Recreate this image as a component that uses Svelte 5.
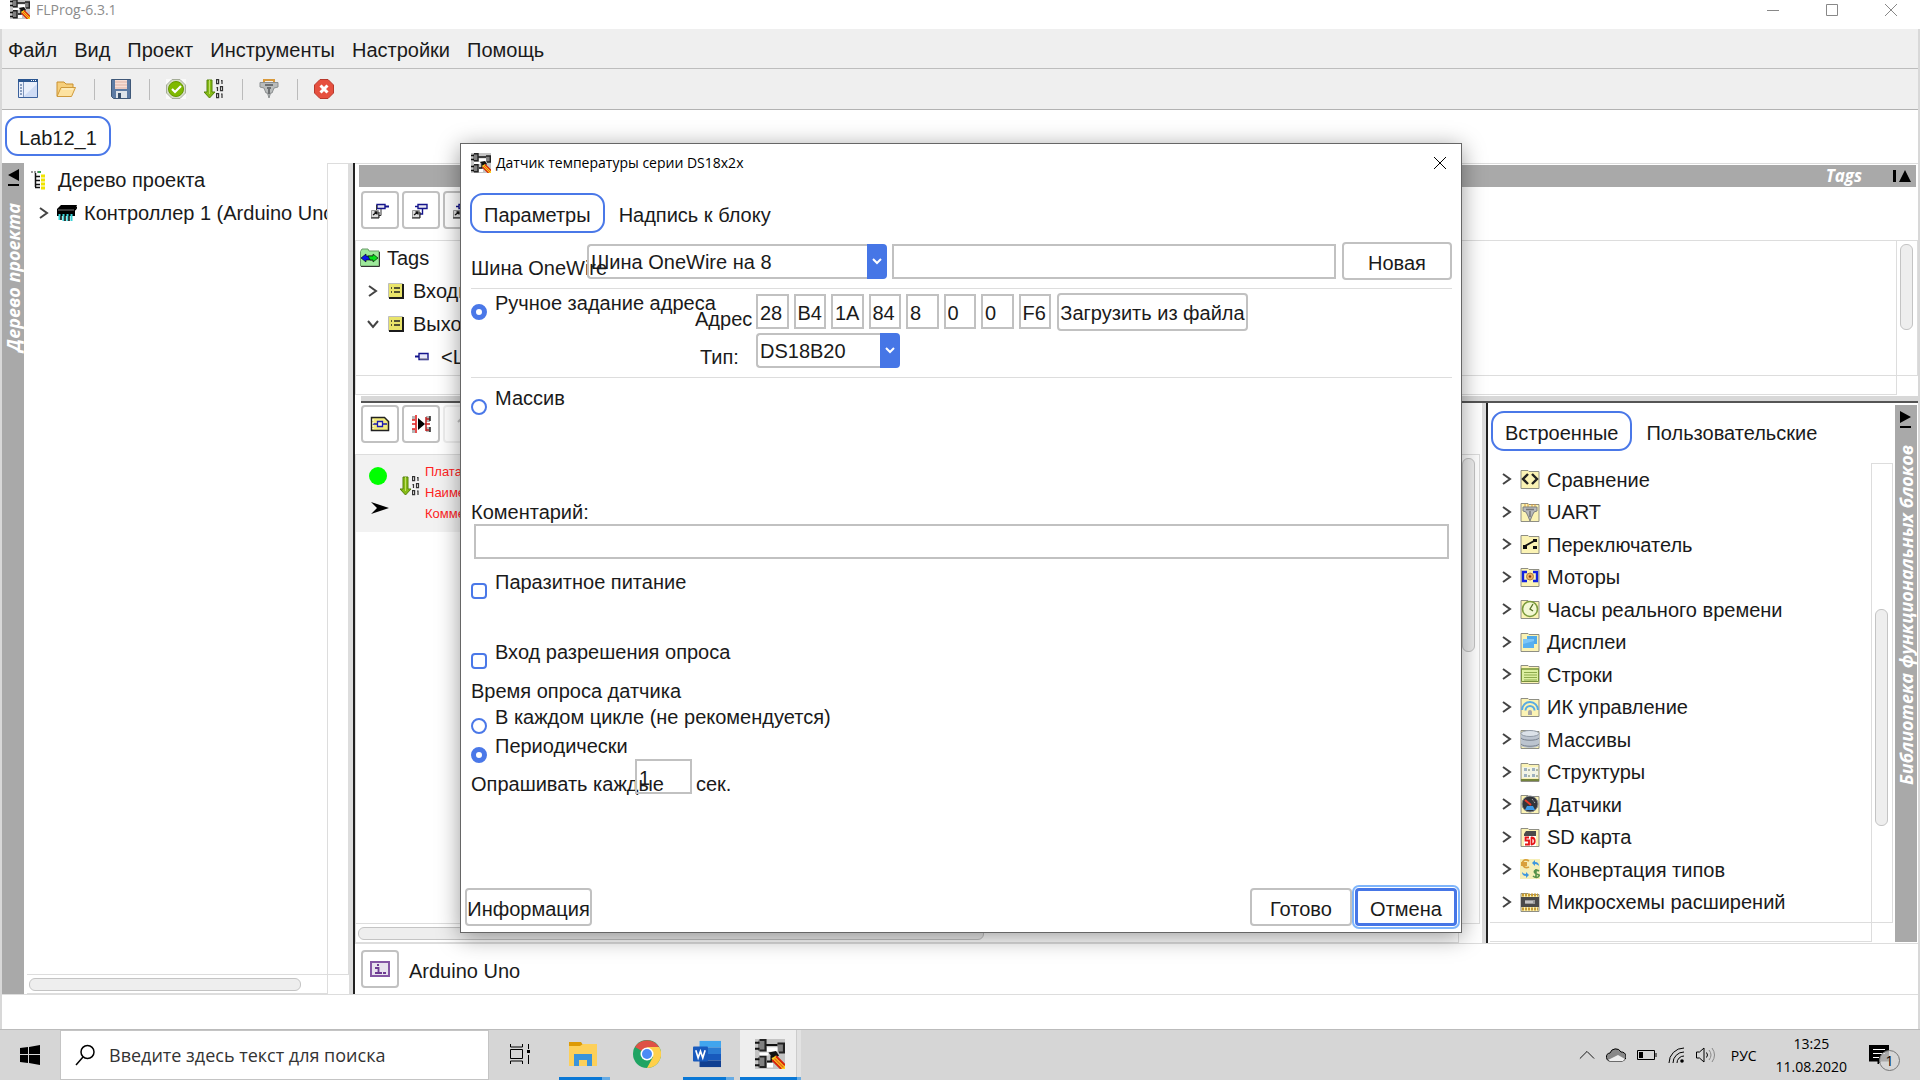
<script>
  let bus = 'Шина OneWire на 8';
  let busName = '';
  let address = ['28', 'B4', '1A', '84', '8', '0', '0', 'F6'];
  let sensorType = 'DS18B20';
  let addressMode = 'manual';
  let comment = '';
  let parasite = false;
  let enableInput = false;
  let pollMode = 'period';
  let period = '1';

  const menu = ['Файл', 'Вид', 'Проект', 'Инструменты', 'Настройки', 'Помощь'];

  const folder = '<path d="M1 1.5h7l1 1h10v17H1z" fill="#fbf3b4" stroke="#8f8f84"/>';

  // 20x20 icons
  const icons = {
    app: '<path d="M0 0h20v20H0z" fill="#c4c4c4"/><path d="M2 1h5v7H2zM2 12h5v7H2zM15 3h4v6h-4z" fill="#808080"/><path d="M0 2.500h3M0 6.500h3M0 13.500h3M0 17.500h3M7 4h8M8 15h3v-4" fill="none" stroke="#111" stroke-width="1.400"/><path d="M3 .700h4v7H3M3 11.700h4v7H3M15 3h4.300v6H16" fill="none" stroke="#222" stroke-width="1.400"/><path d="M8 5.500h7v3H8zM3 9h6v2H3zM8 16h4v3H8z" fill="#fff"/><path d="M9 9l5-1 2 3-3 3z" fill="#111"/><path d="M11 13l3-2 6 6v3h-3z" fill="#ffd21c"/><path d="M14 11.500l6 6M11.500 14l6 6" stroke="#d7260d" stroke-width="1.300"/><path d="M13 13l6 6" stroke="#e8661a"/>',
    project: '<path d="M.5.5h19v18H.5z" fill="#e9effc" stroke="#3b619c"/><path d="M0 0h20v3H0z" fill="#2b5691"/><path d="M5.5 3v15" stroke="#7f96bd"/><path d="M2 6h2M2 9h2M2 12h2M2 15h2" stroke="#2c4f82"/><path d="M13 1.5h1M15 1.5h1M17 1.5h1" stroke="#fff"/><path d="M6 17L19 5v13H6z" fill="#cfdcf5"/>',
    open: '<path d="M1 17V3h7l2 2h7v3" fill="#f6cf7c" stroke="#c9902f"/><path d="M1 17.500L5 8.500h14.500l-4 9z" fill="#fde2a0" stroke="#cf9a3c"/><path d="M6 10h11" stroke="#fff4d2"/>',
    save: '<path d="M.5.500h19v19h-17l-2-2z" fill="#5d7ba4" stroke="#3f5878"/><path d="M4 1h12v9H4z" fill="#f6ded6"/><path d="M4 3h12M4 6h12M4 9h12" stroke="#dfb3a6"/><path d="M5 12h11v7H5z" fill="#dfe4ea"/><path d="M7 14h3v5H7z" fill="#38506e"/>',
    check: '<path d="M0 0h20v20H0z" fill="#fafafa"/><path d="M6 .500h8l5.500 5.500v8L14 19.500H6L.5 14V6z" fill="#d6dcc9" stroke="#a5ad98"/><circle cx="10" cy="10" r="7.500" fill="#7fb900" stroke="#679900"/><path d="M6 10l3 3 6-6" fill="none" stroke="#fff" stroke-width="2.200"/>',
    upload: '<path d="M3 1h5v12h3l-5.500 6L0 13h3z" fill="#86bb16" stroke="#55830b"/><path d="M5.500 1v14" stroke="#c0e069"/><g fill="none" stroke="#333" stroke-width="1.200"><path d="M12.600.600h2v4h-2zM12.600 14.600h2v4h-2zM16.500 7.600h2v4h-2zM17 1.600h1V5M12.500 8.600h1V12M17 15h1v4"/></g>',
    plug: '<path d="M5 0v4M15 0v4M5 1h10" stroke="#d99a3c" stroke-width="2"/><path d="M1 3.500h18V8l-4 1-2 5h-1.500L10 19l-1.500-5H7L5 9 1 8z" fill="#b9bcbc" stroke="#8b8f90"/><path d="M6 6h8M8 9h4M10 9v6" stroke="#6d7072" stroke-width="2"/>',
    stop: '<path d="M6 .5h8L19.500 6v8L14 19.500H6L.5 14V6z" fill="#e6503f" stroke="#b8392c"/><path d="M6.500 6.500l7 7m0-7l-7 7" stroke="#fff" stroke-width="3"/>',
    root: '<path d="M0 2h9" stroke="#9a9a9a" stroke-width="2" stroke-dasharray="2 1"/><path d="M4.500 3v14M4 6.500h5M4 10.500h5M4 14.500h5M4 17.500h5" fill="none" stroke="#111" stroke-width="1.500"/><path d="M10 6h4M10 10h4M10 14h4M10 18h4" stroke="#f0e400" stroke-width="3"/><path d="M7 2h3" stroke="#3aa655" stroke-width="2"/>',
    chip: '<path d="M0 6l4-4h16l-2 5v6H0z" fill="#000"/><path d="M1 7h16" stroke="#777"/><path d="M2.500 11v6M6.500 11v7M10.500 11v7M14.500 11v7" stroke="#3bd3d8" stroke-width="2"/><path d="M4 13v4M8 13v5M12 13v5M18 7l2-3" stroke="#000" stroke-width="1.500"/>',
    tags: '<path d="M.5 3.500L2 1h6l1 2h10v15H.5z" fill="#9de89a" stroke="#6d9b6a"/><path d="M1 18.500h18.500V4" fill="none" stroke="#333"/><path d="M1 10l5-4v2h7v4H6v2z" fill="#0a16e8" stroke="#000" stroke-width=".6"/><path d="M8 8h5V6l5 4-5 4v-2h-3z" fill="#06e01a" stroke="#000" stroke-width=".6"/>',
    list: '<path d="M2.500 2.500h14v14h-14z" fill="#e9e46a" stroke="#bdbdbd"/><path d="M3 17h14V3" fill="none" stroke="#1b1b1b" stroke-width="2"/><path d="M5 7h1M8 7h6M5 11h1M8 11h6" stroke="#222" stroke-width="1.600"/>',
    tag: '<path d="M1 9.500h4" stroke="#14148c" stroke-width="2"/><path d="M5 6.500h9v6H5z" fill="#e6e6fa" stroke="#14148c" stroke-width="1.400"/><path d="M6 12h8" stroke="#888"/>',
    addTag: '<path d="M7 4.500h8v4H7z" fill="#e6e6f2" stroke="#14148c" stroke-width="1.400"/><path d="M15 6.500h4" stroke="#14148c" stroke-width="2"/><path d="M6.500 5v7M9 15.500h2V9" fill="none" stroke="#333"/><path d="M1.500 10.500h7v7h-7z" fill="#ddd" stroke="#999"/><path d="M3 15l4-3M4.500 12H7v2.500" fill="none" stroke="#111" stroke-width="1.300"/><path d="M1 18h8v-6" fill="none" stroke="#111"/>',
    addTag2: '<path d="M7 4.500h9v4H7z" fill="#e6e6f2" stroke="#14148c" stroke-width="1.400"/><path d="M4 6.500h3M11.500 9v5H9" fill="none" stroke="#14148c" stroke-width="1.400"/><path d="M1.500 10.500h7v7h-7z" fill="#ddd" stroke="#999"/><path d="M3 15l4-3M4.500 12H7v2.500" fill="none" stroke="#111" stroke-width="1.300"/><path d="M1 18h8v-6" fill="none" stroke="#111"/>',
    board: '<path d="M1.500 3.500h13l4 4v9h-17z" fill="#f2eb7b" stroke="#222" stroke-width="1.500"/><path d="M7.500 7.500h5v5h-5zM3 10h4M13 10h4" fill="#fffbd0" stroke="#1a1ab0" stroke-width="1.300"/><path d="M3 5v10" stroke="#fff" stroke-dasharray="2 1"/>',
    convert: '<path d="M1 2h3v4H1zM1 15h3v4H1zM15 2h4v6h-4zM15 13h4v5h-4z" fill="#b5b5b5"/><path d="M5 1v18M1 10h4M1 6h3M1 15h3" stroke="#e02222" stroke-width="1.600"/><path d="M7 4l7 6-7 6z" fill="#000"/><path d="M14 10h5M15 3v14M15 5h4M15 16h3" fill="none" stroke="#c02222" stroke-width="1.500"/><path d="M19 2v5M19 13v5" stroke="#222" stroke-width="1.500"/>',
    up: '<path d="M6 8l5-5 5 5M11 3v13" fill="none" stroke="#c4c4c4" stroke-width="2"/>',
    info: '<path d="M1 3h18v14H1z" fill="#e8e2ee" stroke="#8456a4" stroke-width="2"/><path d="M7 6h2M5 9h3.500v5M5 14h7M13 14h3" fill="none" stroke="#6d3b92" stroke-width="1.800"/>',
    compare: folder + '<path d="M8 5l-5 5 5 5M12 5l5 5-5 5" fill="none" stroke="#222" stroke-width="2.400"/>',
    uart: folder + '<path d="M5 2v3M8 2v3M12 2v3M15 2v3" stroke="#d99a3c"/><path d="M3 5h14v4l-3 1-2 4-2 5-2-5-2-4-3-1z" fill="#b7b9ba" stroke="#7d8082"/><path d="M6 7.500h8M10 9v6" stroke="#777" stroke-width="1.500"/>',
    switch: folder + '<path d="M3 11h4v4H3zM13 5h4v3h-4zM13 12h4v3h-4z" fill="#111"/><path d="M5 12l9-5" stroke="#111" stroke-width="2"/>',
    motor: folder + '<path d="M7 5H3v9h4M13 5h4v9h-4" fill="none" stroke="#1222e0" stroke-width="2.400"/><circle cx="10" cy="9.500" r="3.500" fill="#f0b060" stroke="#b08040"/><circle cx="10" cy="9.500" r="1.200" fill="#7a3b10"/>',
    clock: folder + '<circle cx="10" cy="10" r="7.500" fill="#f3f8d4" stroke="#7b9b3c" stroke-width="1.600"/><path d="M13 5l-3 5 3 2" fill="none" stroke="#567028" stroke-width="1.300"/>',
    display: folder + '<path d="M7 4h10v8H7z" fill="#4fa9ea"/><path d="M3 7h11v9H3z" fill="#7cc6f8"/><path d="M3 12l11-3v7H3z" fill="#58b0f0"/>',
    strings: folder + '<path d="M1.500 4.500h17v13h-17z" fill="#dcefa0" stroke="#78913c"/><path d="M2 5h16" stroke="#94ad54" stroke-width="2"/><path d="M4 8.500h13M4 11h13M4 13.500h13M4 16h13" stroke="#8daa4d"/>',
    ir: folder + '<path d="M2 13a8 8 0 0 1 16 0M5.500 13.500a4.500 4.500 0 0 1 9 0" fill="none" stroke="#58abe4" stroke-width="2"/><path d="M8 18v-3a2 2 0 0 1 4 0v3z" fill="#a5a5a5"/>',
    arrays: folder + '<path d="M1 4v12c0 4 18 4 18 0V4z" fill="#bcc4cf"/><path d="M1 9c2 3 16 3 18 0M1 15c2 3 16 3 18 0" fill="none" stroke="#78818e"/><ellipse cx="10" cy="4.500" rx="9" ry="3" fill="#dce2e9" stroke="#929ba7"/>',
    structs: folder + '<path d="M2 5h16v11H2z" fill="#f3f5e5"/><path d="M4 6h3v3H4zM4 12h3v3H4zM12 6h3v3h-3zM12 12h3v3h-3z" fill="#9fb2c0"/><path d="M8 8h2M8 14h2M16 8h2M16 14h2" stroke="#6b7c62"/><path d="M1 18h18" stroke="#74843e" stroke-width="2"/>',
    sensors: folder + '<circle cx="10" cy="10" r="8" fill="#33363b" stroke="#84888e"/><path d="M5 16h10l-2-4H7z" fill="#3c9ae8"/><path d="M5 6l6 5" stroke="#e63a2a" stroke-width="2"/><path d="M12 5l3 4" stroke="#c9ccd0" stroke-dasharray="1 1"/>',
    sd: folder + '<path d="M6 4h10v15H4V7z" fill="#4b4b4b"/><path d="M4 9h12v10H4z" fill="#fff"/><path d="M9 10.500H5.500v3H9v4H5M11.500 10v8M11 10.500c5 0 5 7 0 7" fill="none" stroke="#e61414" stroke-width="1.800"/>',
    types: '<path d="M0 0h20v20H0z" fill="#f6efb8"/><path d="M9 2C4-1 2 3 2.500 5S5 10 9 8M1 4h6M1 6h6" fill="none" stroke="#d9a03c" stroke-width="1.800"/><path d="M19 12c-3-2-6 0-4 2s5 1 4 3-4 2-6 0M16 10v9" fill="none" stroke="#57924b" stroke-width="1.600"/><path d="M12 4l3-3v2c3 0 4 2 4 4-1-1-2-2-4-2v2zM9 16l-3 3v-2c-3 0-4-2-4-4 1 1 2 2 4 2v-2z" fill="#3f97de"/>',
    ics: folder + '<path d="M2 3h16M2 17h16" stroke="#c89c34" stroke-width="3" stroke-dasharray="2 1"/><path d="M1 5h18v10H1z" fill="#4a4a4a"/><path d="M5 8h10v4H5z" fill="#999"/><path d="M6 9v2M8 9v2M10 9v2M12 9v2" stroke="#eee"/>'
  };

  const library = [
    ['compare', 'Сравнение'],
    ['uart', 'UART'],
    ['switch', 'Переключатель'],
    ['motor', 'Моторы'],
    ['clock', 'Часы реального времени'],
    ['display', 'Дисплеи'],
    ['strings', 'Строки'],
    ['ir', 'ИК управление'],
    ['arrays', 'Массивы'],
    ['structs', 'Структуры'],
    ['sensors', 'Датчики'],
    ['sd', 'SD карта'],
    ['types', 'Конвертация типов'],
    ['ics', 'Микросхемы расширений']
  ];
</script>

{#snippet icon(name)}
  <svg class="icon" viewBox="0 0 20 20" aria-hidden="true">{@html icons[name]}</svg>
{/snippet}

{#snippet chevron(open)}
  <svg class="chevron" viewBox="0 0 12 14" aria-hidden="true">
    <path d={open ? 'M1 4l5 6 5-6' : 'M2 2l7 5-7 5'} />
  </svg>
{/snippet}

{#snippet arrow()}
  <span class="drop"><svg viewBox="0 0 12 12"><path d="M2 4l4 4 4-4" /></svg></span>
{/snippet}

<div class="screen">
  <header class="titlebar">
    {@render icon('app')}
    <span class="title">FLProg-6.3.1</span>
    <div class="window-buttons">
      <button aria-label="Свернуть"><svg viewBox="0 0 14 14"><path d="M1 7.500h12" /></svg></button>
      <button aria-label="Развернуть"><svg viewBox="0 0 14 14"><path d="M1.500 1.500h11v11h-11z" /></svg></button>
      <button aria-label="Закрыть"><svg viewBox="0 0 14 14"><path d="M1 1l12 12M13 1L1 13" /></svg></button>
    </div>
  </header>

  <div class="window">
    <nav class="menubar">
      {#each menu as item}
        <button>{item}</button>
      {/each}
    </nav>

    <div class="toolbar">
      <button aria-label="Новый проект">{@render icon('project')}</button>
      <button aria-label="Открыть">{@render icon('open')}</button>
      <i></i>
      <button aria-label="Сохранить">{@render icon('save')}</button>
      <i></i>
      <button aria-label="Проверить">{@render icon('check')}</button>
      <button aria-label="Загрузить">{@render icon('upload')}</button>
      <i></i>
      <button aria-label="Монитор порта">{@render icon('plug')}</button>
      <i></i>
      <button aria-label="Стоп">{@render icon('stop')}</button>
    </div>

    <div class="project-tabs">
      <button class="tab active">Lab12_1</button>
    </div>

    <div class="workspace">
      <aside class="project">
        <div class="strip">
          <svg viewBox="0 0 12 18"><path d="M12 0v12L1 6zM1 15h11v2H1z" /></svg>
          <span>Дерево проекта</span>
        </div>
        <div class="scroll">
          <div class="tree">
            <div class="node root">{@render icon('root')}<span>Дерево проекта</span></div>
            <div class="node">{@render chevron(false)}{@render icon('chip')}<span>Контроллер 1 (Arduino Uno)</span></div>
          </div>
          <div class="vbar"></div>
          <div class="hbar"><div class="thumb tree-thumb"></div></div>
          <div class="corner"></div>
        </div>
      </aside>
      <div class="vsplit"></div>

      <main>
        <section class="tags">
          <div class="tags-head">
            <span>Tags</span>
            <svg viewBox="0 0 18 12"><path d="M0 0h3v12H0zM6 12L12 0l6 12z" /></svg>
          </div>
          <div class="tools">
            <button aria-label="Добавить вход">{@render icon('addTag')}</button>
            <button aria-label="Добавить выход">{@render icon('addTag2')}</button>
            <button aria-label="Добавить тег">{@render icon('addTag2')}</button>
          </div>
          <div class="scroll framed">
            <div class="tree">
              <div class="node root">{@render icon('tags')}<span>Tags</span></div>
              <div class="node">{@render chevron(false)}{@render icon('list')}<span>Входы</span></div>
              <div class="node">{@render chevron(true)}{@render icon('list')}<span>Выходы</span></div>
              <div class="node leaf">{@render icon('tag')}<span>&lt;LED</span></div>
            </div>
            <div class="vbar"><div class="thumb tags-thumb"></div></div>
            <div class="hbar"></div>
            <div class="corner"></div>
          </div>
        </section>
        <div class="hsplit"></div>

        <div class="lower">
          <section class="scheme">
            <div class="tools">
              <button aria-label="Добавить плату">{@render icon('board')}</button>
              <button aria-label="Преобразовать">{@render icon('convert')}</button>
              <button aria-label="Вверх" disabled>{@render icon('up')}</button>
            </div>
            <div class="scroll framed">
              <div class="canvas">
                <div class="board-row">
                  <svg class="state" viewBox="0 0 20 50">
                    <circle cx="10" cy="10" r="9" fill="#0f0" />
                    <path d="M3 36l18 6-18 6 6-6z" />
                  </svg>
                  {@render icon('upload')}
                  <div class="board-text">
                    <span>Плата:</span>
                    <span>Наименование:</span>
                    <span>Комментарий:</span>
                  </div>
                </div>
              </div>
              <div class="vbar"><div class="thumb scheme-vthumb"></div></div>
              <div class="hbar"><div class="thumb scheme-hthumb"></div></div>
              <div class="corner"></div>
            </div>
          </section>
          <div class="vsplit"></div>
          <section class="library">
            <div class="library-body">
              <div class="tabs">
                <button class="tab active">Встроенные</button>
                <button class="tab">Пользовательские</button>
              </div>
              <div class="scroll">
                <div class="blocks">
                  {#each library as [name, label]}
                    <div class="node">{@render chevron(false)}{@render icon(name)}<span>{label}</span></div>
                  {/each}
                </div>
                <div class="vbar"><div class="thumb library-thumb"></div></div>
                <div class="hbar"></div>
                <div class="corner"></div>
              </div>
            </div>
            <div class="strip">
              <svg viewBox="0 0 12 18"><path d="M0 0v12l11-6zM0 15h11v2H0z" /></svg>
              <span>Библиотека функциональных блоков</span>
            </div>
          </section>
        </div>

        <div class="status tools">
          <button aria-label="О контроллере">{@render icon('info')}</button>
          <span>Arduino Uno</span>
        </div>
      </main>
    </div>
  </div>

  <footer class="taskbar">
    <button class="start" aria-label="Пуск">
      <svg viewBox="0 0 20 20"><path d="M0 3l8-1v7H0zM9 2l11-2v9H9zM0 10h8v8l-8-1zM9 10h11v10L9 18z" /></svg>
    </button>
    <label class="search">
      <svg viewBox="0 0 22 22"><circle cx="13.500" cy="8" r="6.500" /><path d="M9 13l-7 8" /></svg>
      <input type="text" placeholder="Введите здесь текст для поиска" />
    </label>
    <button class="task overview" aria-label="Представление задач">
      <svg viewBox="0 0 22 20"><path d="M1.500 0v3h12V0M1.500 20v-3h12v3M1.500 5.500h12v9h-12zM19.500 0v5M19.500 11v9" /><path d="M18 6h3v3h-3z" fill="#000" stroke="none" /></svg>
    </button>
    <button class="task running" aria-label="Проводник">
      <svg viewBox="0 0 28 24"><path d="M0 0h12l2 3v5H0z" fill="#dd9a06" /><path d="M0 4h11l3-2h14v22H0z" fill="#fdd05a" /><path d="M5 24V12h18v12h-5v-6h-8v6z" fill="#3b94dc" /></svg>
    </button>
    <button class="task" aria-label="Chrome">
      <svg viewBox="0 0 28 28"><circle cx="14" cy="14" r="14" fill="#1fa463" /><path d="M14 14L2 7a14 14 0 0 1 24 0z" fill="#de5246" /><path d="M14 7h12.200A14 14 0 0 1 14 28l6-11z" fill="#ffd04b" /><circle cx="14" cy="14" r="6.500" fill="#fff" /><circle cx="14" cy="14" r="5" fill="#4c8bf5" /></svg>
    </button>
    <button class="task running" aria-label="Word">
      <svg viewBox="0 0 30 28"><path d="M7 0h23v7H7z" fill="#41a5ee" /><path d="M7 7h23v7H7z" fill="#2b7cd3" /><path d="M7 14h23v7H7z" fill="#185abd" /><path d="M7 21h23v7H7z" fill="#103f91" /><rect y="6" width="16" height="16" rx="1" fill="#185abd" /><path d="M3 10l2.500 8L8 11l2.500 7L13 10" fill="none" stroke="#fff" stroke-width="1.800" /></svg>
    </button>
    <button class="task running current" aria-label="FLProg">{@render icon('app')}</button>

    <div class="tray">
      <svg class="up" viewBox="0 0 18 10"><path d="M1 9l8-8 8 8" /></svg>
      <svg class="cloud" viewBox="0 0 20 14"><path d="M5 13a4 4 0 0 1-1-8 6 6 0 0 1 11-1 4.500 4.500 0 0 1 1 9z" fill="#888" /><path d="M2 12l10-5 7 4-2 2H4z" fill="#eee" stroke="none" /></svg>
      <svg class="battery" viewBox="0 0 20 12"><path d="M.5 1.500h17v9H.5zM19 4v4" /><path d="M2 3h4v6H2z" fill="#000" stroke="none" /></svg>
      <svg class="wifi" viewBox="0 0 16 16"><path d="M1 16A15 15 0 0 1 16 1M5 16A11 11 0 0 1 16 5M9 16a7 7 0 0 1 7-7" /><circle cx="14" cy="14" r="1.800" fill="#000" stroke="none" /></svg>
      <svg class="sound" viewBox="0 0 22 18"><path d="M1.500 6h3L9 2v14l-4.500-4h-3zM11.500 6.500q2 2.500 0 5" /><path d="M14 4q4 5 0 10M17 2q5 7 0 14" stroke="#888" /></svg>
      <span class="lang">РУС</span>
      <div class="clock"><span>13:25</span><span>11.08.2020</span></div>
      <button class="notes" aria-label="Уведомления">
        <svg viewBox="0 0 20 20"><path d="M0 0h20v16h-8l-3 3v-3H0z" /><path d="M4 4.500h12M4 8.500h12M4 12.500h6" stroke="#fff" /></svg>
        <span>1</span>
      </button>
    </div>
  </footer>

  <div class="dialog" role="dialog" aria-label="Датчик температуры серии DS18x2x">
    <div class="dialog-title">
      {@render icon('app')}
      <span>Датчик температуры серии DS18x2x</span>
      <button aria-label="Закрыть окно"><svg viewBox="0 0 14 14"><path d="M1 1l12 12M13 1L1 13" /></svg></button>
    </div>
    <div class="tabs">
      <button class="tab active">Параметры</button>
      <button class="tab">Надпись к блоку</button>
    </div>

    <form on:submit|preventDefault>
      <div class="bus-row">
        <label for="bus">Шина OneWire</label>
        <div class="combo bus">
          <select id="bus" bind:value={bus}><option>Шина OneWire на 8</option></select>
          {@render arrow()}
        </div>
        <input class="bus-name" type="text" aria-label="Имя шины" bind:value={busName} />
        <button type="button" class="btn new">Новая</button>
      </div>
      <hr />
      <div class="address-block">
        <label class="check"><input type="radio" value="manual" bind:group={addressMode} /><span>Ручное задание адреса</span></label>
        <div class="address-fields">
          <span class="caption">Адрес</span>
          <div class="bytes">
            {#each address as byte, i}
              <input type="text" aria-label="Байт {i + 1}" size="2" bind:value={address[i]} />
            {/each}
          </div>
          <button type="button" class="btn load">Загрузить из файла</button>
          <label class="caption type" for="type">Тип:</label>
          <div class="combo">
            <select id="type" bind:value={sensorType}><option>DS18B20</option></select>
            {@render arrow()}
          </div>
        </div>
      </div>
      <hr />
      <label class="check array"><input type="radio" value="array" bind:group={addressMode} /><span>Массив</span></label>

      <label for="comment">Коментарий:</label>
      <input id="comment" class="comment" type="text" bind:value={comment} />

      <label class="check parasite"><input type="checkbox" bind:checked={parasite} /><span>Паразитное питание</span></label>
      <label class="check enable"><input type="checkbox" bind:checked={enableInput} /><span>Вход разрешения опроса</span></label>

      <span class="poll">Время опроса датчика</span>
      <label class="check"><input type="radio" value="cycle" bind:group={pollMode} /><span>В каждом цикле (не рекомендуется)</span></label>
      <label class="check"><input type="radio" value="period" bind:group={pollMode} /><span>Периодически</span></label>
      <div class="period">
        <label for="period">Опрашивать каждые</label>
        <input id="period" type="text" bind:value={period} />
        <span>сек.</span>
      </div>
    </form>

    <div class="dialog-buttons">
      <button class="btn info">Информация</button>
      <button class="btn">Готово</button>
      <button class="btn focused">Отмена</button>
    </div>
  </div>
</div>

<style>
  :global(body) {
    margin: 0;
    background: white;
  }

  .screen, .screen :global(*) {
    box-sizing: border-box;
  }

  .screen {
    position: relative;
    display: flex;
    flex-direction: column;
    height: 100vh;
    overflow: hidden;
    font: 20px/23px "Liberation Sans", Arial, sans-serif;
    color: #1a1a1a;
  }

  button, input, select {
    font: inherit;
    color: inherit;
    margin: 0;
    padding: 0;
    border: 0;
    background: none;
  }

  button {
    white-space: nowrap;
  }

  svg {
    display: block;
    flex: none;
  }

  .icon {
    width: 20px;
    height: 20px;
  }

  /* title bar */
  .titlebar {
    display: flex;
    align-items: flex-start;
    height: 29px;
    padding-left: 10px;
    gap: 6px;
  }

  .titlebar .icon {
    margin-top: -1px;
  }

  .title {
    flex: 1;
    color: #8c8c8c;
    font: 14px/20px "Open Sans", sans-serif;
  }

  .window-buttons {
    display: flex;
  }

  .window-buttons button {
    display: flex;
    justify-content: center;
    width: 59px;
    padding-top: 3px;
  }

  .window-buttons svg {
    width: 14px;
    height: 14px;
    fill: none;
    stroke: #888;
  }

  .window {
    flex: 1;
    min-height: 0;
    display: flex;
    flex-direction: column;
    border-left: 2px solid #d8d8d8;
    border-right: 2px solid #d8d8d8;
    padding-bottom: 34px;
  }

  .menubar {
    display: flex;
    gap: 17px;
    height: 40px;
    padding: 4px 0 0 6px;
    background: #efefef;
    border-bottom: 1px solid #bdbdbd;
  }

  .toolbar {
    display: flex;
    align-items: center;
    gap: 18px;
    height: 41px;
    padding-left: 16px;
    background: #efefef;
    border-bottom: 1px solid #b2b2b2;
  }

  .toolbar i {
    width: 1px;
    height: 21px;
    margin-right: -2px;
    background: #bbb;
  }

  .project-tabs {
    padding: 6px 3px 7px;
  }

  .tab {
    height: 40px;
    padding: 5px 12px 0;
    border: 2px solid transparent;
    border-radius: 13px;
  }

  .tab.active {
    border-color: #4a78e8;
  }

  .tabs {
    display: flex;
  }

  .workspace {
    flex: 1;
    min-height: 0;
    display: flex;
    border-bottom: 1px solid #ddd;
  }

  /* side strips with turned captions */
  .strip {
    display: flex;
    flex-direction: column;
    align-items: center;
    flex: none;
    width: 22px;
    padding-top: 6px;
    gap: 16px;
    background: #a9a9a9;
  }

  .strip svg {
    width: 12px;
    height: 18px;
  }

  .strip span {
    writing-mode: vertical-rl;
    transform: rotate(180deg);
    white-space: nowrap;
    color: white;
    font: italic bold 18px/22px "Open Sans", sans-serif;
  }

  .project {
    display: flex;
    flex: none;
    width: 347px;
    gap: 3px;
  }

  .vsplit {
    flex: none;
    width: 6px;
    background: #ddd;
    border-right: 2px solid #222;
  }

  .hsplit {
    flex: none;
    height: 7px;
    margin-left: 6px;
    background: #d8d8d8;
    border-bottom: 2px solid #555;
  }

  /* scroll area: view, vertical bar, horizontal bar, corner */
  .scroll {
    flex: 1;
    min-width: 0;
    min-height: 0;
    display: grid;
    grid-template: minmax(0, 1fr) 20px / minmax(0, 1fr) 22px;
  }

  .scroll.framed {
    border-top: 1px solid #ddd;
    border-left: 1px solid #ddd;
  }

  .vbar {
    border: solid #ddd;
    border-width: 1px 1px 0 1px;
    padding: 3px;
  }

  .framed .vbar {
    border-top: 0;
  }

  .hbar {
    border: solid #ddd;
    border-width: 1px 0;
    padding: 3px 2px;
  }

  .corner {
    border: solid #ddd;
    border-width: 1px 0 0 1px;
  }

  .thumb {
    background: #eee;
    border: 1px solid #c4c4c4;
    border-radius: 6px;
    width: 13px;
    height: 13px;
  }

  .tree-thumb { width: 92%; }
  .tags-thumb { height: 67%; }
  .scheme-vthumb { height: 42%; }
  .scheme-hthumb { width: 57%; }
  .library-thumb { height: 48%; margin-top: 142px; }

  .tree {
    overflow: hidden;
  }

  .node {
    display: flex;
    align-items: center;
    height: 33px;
    padding-left: 11px;
    gap: 7px;
    white-space: nowrap;
  }

  .node.root {
    padding-left: 4px;
  }

  .node.leaf {
    padding-left: 58px;
  }

  .node span {
    padding-top: 2px;
  }

  .chevron {
    width: 12px;
    height: 14px;
    fill: none;
    stroke: #444;
    stroke-width: 2;
  }

  main {
    flex: 1;
    min-width: 0;
    display: flex;
    flex-direction: column;
  }

  .tags {
    display: flex;
    flex-direction: column;
    flex: none;
    height: 233px;
    padding-bottom: 1px;
    border-top: 1px solid #ddd;
  }

  .tags-head {
    display: flex;
    align-items: center;
    justify-content: flex-end;
    gap: 31px;
    height: 22px;
    margin: 1px 2px 0 4px;
    padding-right: 5px;
    background: #a9a9a9;
    color: white;
    font: italic bold 17px/20px "Open Sans", sans-serif;
  }

  .tags-head svg {
    width: 18px;
    height: 12px;
    fill: black;
  }

  .tools {
    display: flex;
    gap: 3px;
    padding: 4px 6px 11px;
  }

  .tools button {
    display: flex;
    align-items: center;
    justify-content: center;
    width: 38px;
    height: 38px;
    border: 2px solid #c1c1c1;
    border-radius: 4px;
  }

  .tools button:disabled {
    border-color: #eee;
  }

  .lower {
    flex: 1;
    min-height: 0;
    display: flex;
  }

  .scheme {
    flex: 1;
    min-width: 0;
    display: flex;
    flex-direction: column;
    margin-right: 2px;
  }

  .scheme .tools {
    padding-top: 2px;
  }

  .board-row {
    display: flex;
    height: 77px;
    padding: 11px 0 0 12px;
    gap: 12px;
    background: #f2f2f2;
  }

  .board-row .icon {
    margin-top: 10px;
  }

  .state {
    width: 20px;
    height: 50px;
    overflow: visible;
  }

  .board-text {
    display: flex;
    flex-direction: column;
    margin: -5px 0 0 -7px;
    color: #f22;
    font-size: 13px;
    line-height: 21px;
  }

  .library {
    display: flex;
    flex: none;
    width: 430px;
    padding: 2px 1px 1px 2px;
  }

  .library-body {
    flex: 1;
    min-width: 0;
    display: flex;
    flex-direction: column;
    margin-right: 2px;
  }

  .library .tabs {
    padding: 6px 0 12px 1px;
  }

  .blocks {
    display: grid;
    grid-auto-rows: 1fr;
    height: 455px;
  }

  .blocks .node {
    height: auto;
  }

  .status {
    height: 51px;
    padding-top: 6px;
    gap: 10px;
    border-top: 1px solid #ddd;
  }

  .status span {
    padding-top: 10px;
  }

  /* dialog */
  .dialog {
    position: absolute;
    top: 143px;
    bottom: 147px;
    left: 460px;
    right: 458px;
    display: flex;
    flex-direction: column;
    border: 1px solid #666;
    background: white;
    box-shadow: 0 4px 22px rgba(0, 0, 0, 0.4);
  }

  .dialog-title {
    display: flex;
    align-items: center;
    height: 37px;
    margin-bottom: 12px;
    padding: 0 14px 0 10px;
    gap: 5px;
    font: 14px/20px "Open Sans", sans-serif;
    color: black;
  }

  .dialog-title span {
    flex: 1;
  }

  .dialog-title svg:not(.icon) {
    width: 14px;
    height: 14px;
    fill: none;
    stroke: black;
  }

  .dialog .tabs {
    padding-left: 9px;
  }

  form {
    display: flex;
    flex-direction: column;
    padding: 9px 9px 0 10px;
  }

  form label, form span {
    white-space: nowrap;
  }

  form input[type='text'] {
    height: 35px;
    padding: 3px 2px 0;
    border: 2px solid #c1c1c1;
    min-width: 0;
  }

  hr {
    width: 100%;
    height: 1px;
    margin: 8px 0 3px;
    border: 0;
    background: #ddd;
  }

  .btn {
    display: flex;
    align-items: center;
    justify-content: center;
    width: 102px;
    height: 38px;
    padding-top: 4px;
    border: 2px solid #c1c1c1;
    border-radius: 4px;
  }

  .bus-row {
    display: flex;
    align-items: center;
    gap: 5px;
    height: 38px;
  }

  /* captions are wider than their column and run over the field */
  .bus-row label {
    align-self: flex-end;
    width: 111px;
  }

  .combo {
    display: flex;
    height: 35px;
  }

  .combo select {
    flex: 1;
    min-width: 0;
    padding: 3px 0 0 2px;
    border: 2px solid #c1c1c1;
    border-right: 0;
    border-radius: 4px 0 0 4px;
    appearance: none;
  }

  .combo.bus {
    width: 300px;
  }

  .drop {
    display: flex;
    align-items: center;
    justify-content: center;
    width: 20px;
    background: #4676e6;
    border-radius: 0 4px 4px 0;
    pointer-events: none;
  }

  .drop svg {
    width: 12px;
    height: 12px;
    fill: none;
    stroke: white;
    stroke-width: 2;
  }

  .bus-name {
    flex: 1;
  }

  .btn.new {
    width: 110px;
    margin-left: 1px;
  }

  .address-block {
    display: flex;
    height: 77px;
  }

  .address-block .check {
    width: 224px;
  }

  .address-fields {
    display: grid;
    grid-template-columns: 56px 295px 192px;
    grid-template-rows: 39px 38px;
    column-gap: 5px;
    align-items: center;
  }

  .caption {
    align-self: flex-end;
  }

  .caption.type {
    padding-left: 5px;
  }

  .bytes {
    display: grid;
    grid-template-columns: repeat(8, 1fr);
    gap: 5px;
  }

  .address-fields .combo {
    width: 144px;
  }

  .address-fields .load {
    width: auto;
    margin-left: 1px;
  }

  .check {
    display: flex;
    align-items: flex-start;
    gap: 8px;
    height: 29px;
  }

  .check input {
    flex: none;
    width: 16px;
    height: 16px;
    margin-top: 12px;
    border: 2px solid #4a78e8;
    border-radius: 4px;
    appearance: none;
  }

  .check input[type='radio'] {
    border-radius: 50%;
  }

  .check input:checked {
    border-width: 5px;
  }

  .array {
    margin: 6px 0 85px;
  }

  .comment {
    margin: 0 3px 12px;
  }

  .parasite {
    margin-bottom: 41px;
  }

  .enable {
    margin-bottom: 10px;
  }

  .poll {
    margin-bottom: 3px;
  }

  .period {
    display: flex;
    height: 37px;
    margin-top: -5px;
  }

  .period label {
    align-self: flex-end;
    width: 164px;
  }

  .period input {
    width: 57px;
    margin-right: 4px;
  }

  .period span {
    align-self: flex-end;
  }

  .dialog-buttons {
    display: flex;
    gap: 3px;
    margin-top: auto;
    padding: 0 4px 6px;
  }

  .btn.info {
    width: 127px;
    margin-right: auto;
  }

  .btn.focused {
    border: 3px solid #4676e6;
    outline: 2px solid #7fb5fb;
    outline-offset: 1px;
  }

  /* taskbar */
  .taskbar {
    display: flex;
    height: 51px;
    background: #d6d6d6;
    border-top: 1px solid #bbb;
    color: black;
    font: 14px/23px "Open Sans", sans-serif;
  }

  .start {
    display: flex;
    align-items: center;
    justify-content: center;
    width: 60px;
  }

  .start svg {
    width: 20px;
    height: 20px;
  }

  .search {
    display: flex;
    align-items: center;
    gap: 13px;
    width: 429px;
    padding-left: 13px;
    border: 1px solid #c4c4c4;
    background: white;
    font-size: 18px;
  }

  .search svg {
    width: 22px;
    height: 22px;
    fill: none;
    stroke: black;
    stroke-width: 1.5;
  }

  .search input {
    flex: 1;
    min-width: 0;
  }

  .search input::placeholder {
    color: #333;
    opacity: 1;
  }

  .task {
    display: flex;
    align-items: center;
    justify-content: center;
    width: 62px;
    padding: 0 11px 3px 0;
  }

  .task svg {
    width: 28px;
    height: 28px;
  }

  .task.overview {
    width: 70px;
    padding-right: 8px;
  }

  .overview svg {
    width: 22px;
    height: 20px;
    fill: none;
    stroke: black;
  }

  .task.running {
    width: 51px;
    margin-right: 11px;
    padding-right: 3px;
    background: linear-gradient(90deg, #0a78d6 43px, #66abe4 43px) bottom / 100% 3px no-repeat;
  }

  .task.running.current {
    width: 61px;
    margin-left: -5px;
    padding-right: 1px;
    background:
      linear-gradient(90deg, #0a78d6 57px, #66abe4 57px) bottom / 100% 3px no-repeat,
      linear-gradient(90deg, #eee 56px, #ccc 56px, #ccc 57px, #e2e2e2 57px);
  }

  .current .icon {
    width: 30px;
    height: 30px;
  }

  .tray {
    display: flex;
    align-items: center;
    gap: 11px;
    margin-left: auto;
    padding-right: 20px;
  }

  .tray svg {
    height: 18px;
    fill: none;
    stroke: black;
  }

  .up { width: 16px; }
  .cloud { width: 20px; }
  .battery { width: 20px; }
  .wifi { width: 16px; }
  .sound { width: 22px; }

  .lang {
    margin: 0 8px 0 3px;
  }

  .clock {
    display: flex;
    flex-direction: column;
    align-items: center;
  }

  .notes {
    position: relative;
    width: 31px;
    height: 32px;
    margin-left: 11px;
  }

  .tray .notes svg {
    width: 20px;
    height: 20px;
    fill: black;
  }

  .notes span {
    position: absolute;
    right: 0;
    bottom: 0;
    width: 21px;
    height: 21px;
    border: 1px solid #777;
    border-radius: 50%;
    background: #d6d6d6cc;
    line-height: 19px;
  }
</style>
